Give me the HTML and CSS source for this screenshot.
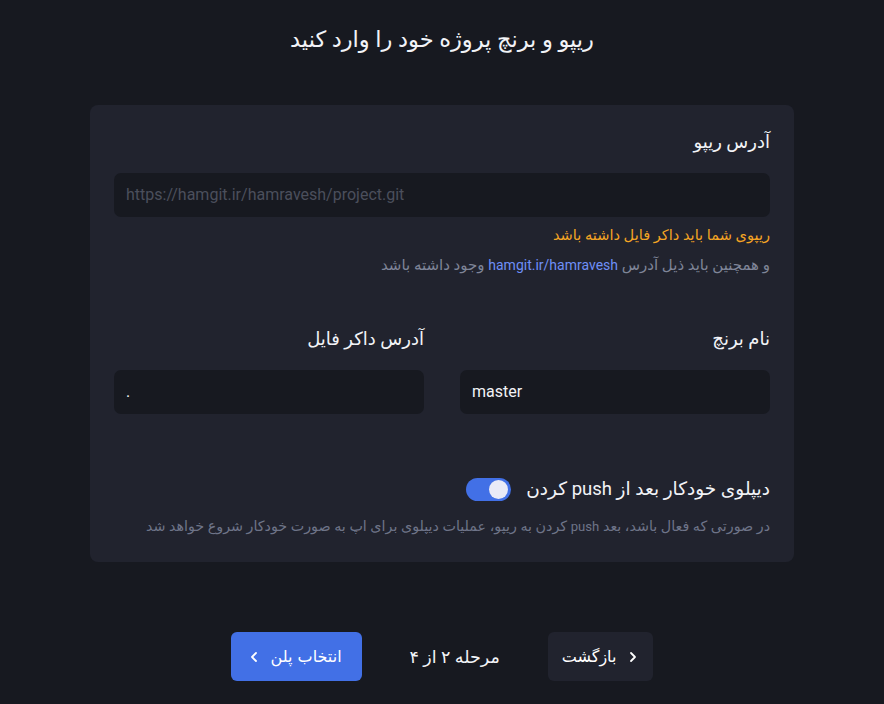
FILE: index.html
```html
<!DOCTYPE html>
<html lang="fa" dir="rtl">
<head>
<meta charset="utf-8">
<title>ریپو و برنچ</title>
<link rel="stylesheet" href="styles.css">
</head>
<body>
<main class="page">
  <h1 class="title">ریپو و برنچ پروژه خود را وارد کنید</h1>
  <section class="card">
    <label class="label">آدرس ریپو</label>
    <div class="input placeholder" dir="ltr">https://hamgit.ir/hamravesh/project.git</div>
    <p class="warn">ریپوی شما باید داکر فایل داشته باشد</p>
    <p class="hint">و همچنین باید ذیل آدرس <span class="link">hamgit.ir/hamravesh</span> وجود داشته باشد</p>

    <div class="cols">
      <div class="col">
        <label class="label">نام برنچ</label>
        <div class="input value" dir="ltr">master</div>
      </div>
      <div class="col">
        <label class="label">آدرس داکر فایل</label>
        <div class="input value" dir="ltr">.</div>
      </div>
    </div>

    <div class="toggle-row">
      <span class="label toggle-label">دیپلوی خودکار بعد از push کردن</span>
      <span class="switch"><span class="knob"></span></span>
    </div>
    <p class="desc">در صورتی که فعال باشد، بعد <span class="latin">push</span> کردن به ریپو، عملیات دیپلوی برای اپ به صورت خودکار شروع خواهد شد</p>
  </section>

  <footer class="footer">
    <button class="btn btn-back">
      <svg class="chev" width="10" height="12" viewBox="0 0 10 12"><path d="M3 2 L7 6 L3 10" fill="none" stroke="#fff" stroke-width="1.8" stroke-linecap="round" stroke-linejoin="round"/></svg>
      <span>بازگشت</span>
    </button>
    <span class="step">مرحله ۲ از ۴</span>
    <button class="btn btn-next">
      <span>انتخاب پلن</span>
      <svg class="chev" width="10" height="12" viewBox="0 0 10 12"><path d="M7 2 L3 6 L7 10" fill="none" stroke="#fff" stroke-width="1.8" stroke-linecap="round" stroke-linejoin="round"/></svg>
    </button>
  </footer>
</main>
</body>
</html>
```

FILE: styles.css
```css
* { box-sizing: border-box; }
html, body {
  margin: 0;
  padding: 0;
  background: #171920;
  color: #ffffff;
  font-family: Roboto, "DejaVu Sans", sans-serif;
}
.page {
  width: 704px;
  margin: 0 auto;
  padding-top: 22px;
}
.title {
  margin: 0;
  font-size: 22.5px;
  font-weight: normal;
  line-height: 34px;
  text-align: center;
  color: #f2f3f7;
}
.card {
  margin-top: 49px;
  background: #21232e;
  border-radius: 8px;
  padding: 24px 24px 25px;
}
.label {
  display: block;
  font-size: 18px;
  line-height: 26px;
  color: #f2f3f7;
}
.toggle-label {
  font-size: 18.5px;
}
.latin {
  font-size: 0.92em;
}
.input {
  height: 44px;
  border-radius: 7px;
  background: #171920;
  font-family: Roboto, sans-serif;
  font-size: 16px;
  line-height: 44px;
  padding: 0 12px;
  text-align: left;
}
.card > .input { margin-top: 18px; }
.placeholder { color: #4b4f5c; }
.value { color: #f2f3f7; }
.warn {
  margin: 8px 0 0;
  font-size: 14.6px;
  line-height: 20px;
  color: #f5a524;
}
.hint {
  margin: 10px 0 0;
  font-size: 15px;
  line-height: 20px;
  color: #7f8598;
}
.link {
  color: #6f8ff7;
  font-family: Roboto, sans-serif;
  font-size: 14px;
}
.cols {
  margin-top: 51px;
  display: grid;
  grid-template-columns: 1fr 1fr;
  gap: 36px;
}
.col .input { margin-top: 18px; }
.toggle-row {
  margin-top: 62px;
  display: flex;
  align-items: center;
  gap: 15px;
}
.switch {
  width: 45px;
  height: 23px;
  border-radius: 12px;
  background: #4270e6;
  display: flex;
  align-items: center;
  justify-content: flex-start;
  padding: 0 3px;
}
.knob {
  width: 19px;
  height: 19px;
  border-radius: 50%;
  background: #e9eaf7;
}
.desc {
  margin: 14px 0 0;
  font-size: 14.3px;
  line-height: 20px;
  color: #6e7488;
}
.footer {
  margin-top: 70px;
  display: flex;
  justify-content: center;
  align-items: center;
  gap: 48px;
}
.btn {
  height: 49px;
  border: 0;
  border-radius: 6px;
  display: flex;
  align-items: center;
  gap: 12px;
  color: #ffffff;
  font-family: "DejaVu Sans", sans-serif;
  font-size: 16px;
  font-weight: normal;
  cursor: pointer;
}
.btn-back {
  background: #21232e;
  padding: 0 15px 0 14px;
}
.btn-next {
  background: #4270e6;
  padding: 0 20px 0 18px;
}
.step {
  font-size: 17.5px;
  color: #f2f3f7;
}
```
